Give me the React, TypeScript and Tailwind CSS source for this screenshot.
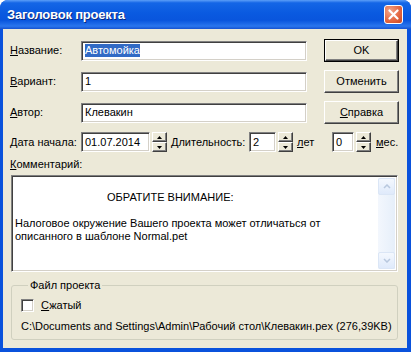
import React from 'react'

type FieldProps = {
	value: string
	width: string
	selected?: boolean
}

const sunken =
	'border border-t-[#808080] border-l-[#808080] border-b-white border-r-white shadow-[inset_1px_1px_0_#404040,inset_-1px_-1px_0_#d4d0c8] bg-white'

function Field({ value, width, selected }: FieldProps) {
	return (
		<div className={`${sunken} ${width} h-[20px] flex items-center pl-[3px] overflow-hidden`}>
			{selected ? <span className="bg-[#316ac5] text-white leading-[13px]">{value}</span> : <span>{value}</span>}
		</div>
	)
}

function Spinner() {
	return (
		<div className="flex flex-col w-[15px] h-[20px] ml-[2px]">
			{['up', 'down'].map((dir) => (
				<div
					key={dir}
					className="flex-1 flex items-center justify-center bg-[#ece9d8] border border-t-white border-l-white border-b-[#404040] border-r-[#404040] shadow-[inset_-1px_-1px_0_#808080]"
				>
					<svg width="5" height="3" viewBox="0 0 5 3">
						{dir === 'up' ? <path d="M2.5 0 L5 3 L0 3 Z" fill="#000" /> : <path d="M0 0 L5 0 L2.5 3 Z" fill="#000" />}
					</svg>
				</div>
			))}
		</div>
	)
}

function Button({ label, isDefault }: { label: React.ReactNode; isDefault?: boolean }) {
	return (
		<div className={`w-[75px] h-[23px] ${isDefault ? 'border border-black' : ''}`}>
			<div className="w-full h-full flex items-center justify-center bg-[#ece9d8] border border-t-white border-l-white border-b-[#404040] border-r-[#404040] shadow-[inset_-1px_-1px_0_#808080]">
				{label}
			</div>
		</div>
	)
}

function Acc({ ch, rest }: { ch: string; rest: string }) {
	return (
		<span>
			<span className="underline underline-offset-[1px]">{ch}</span>
			{rest}
		</span>
	)
}

export default function App() {
	const rows = [
		{ label: <Acc ch="Н" rest="азвание:" />, value: 'Автомойка', selected: true, button: <Button label="OK" isDefault /> },
		{ label: <Acc ch="В" rest="ариант:" />, value: '1', button: <Button label="Отменить" /> },
		{ label: <Acc ch="А" rest="втор:" />, value: 'Клевакин', button: <Button label={<Acc ch="С" rest="правка" />} /> }
	]

	return (
		<div className="w-[411px] h-[352px] bg-white font-['Liberation_Sans',sans-serif] text-[11px] text-black">
			<div className="w-full h-full flex flex-col rounded-t-[8px] overflow-hidden bg-[#0a52dc]">
				<div className="h-[29px] shrink-0 flex items-center justify-between pl-[7px] pr-[8px] bg-[linear-gradient(180deg,#5c9ef8_0%,#1466e6_10%,#0a5ae0_45%,#0955dd_70%,#2a76ee_90%,#1652d0_100%)]">
					<span className="text-white font-bold text-[13px] tracking-[-0.2px] [text-shadow:1px_1px_0_#0a2a80]">
						Заголовок проекта
					</span>
					<div className="w-[19px] h-[19px] rounded-[3px] border border-white bg-[radial-gradient(circle_at_30%_30%,#f4a488,#e2643e_60%,#c8451f)] flex items-center justify-center">
						<svg width="11" height="11" viewBox="0 0 11 11">
							<path d="M1.5 1.5 L9.5 9.5 M9.5 1.5 L1.5 9.5" stroke="#fff" strokeWidth="2.2" strokeLinecap="round" />
						</svg>
					</div>
				</div>
				<div className="flex-1 mx-[3px] mb-[4px] mr-[4px] bg-[#ece9d8] flex flex-col pl-[7px] pt-[10px]">
					<div className="flex flex-col gap-[8px]">
						{rows.map((r, i) => (
							<div key={i} className="flex items-center h-[23px]">
								<div className="w-[71px]">{r.label}</div>
								<Field value={r.value} width="w-[226px]" selected={r.selected} />
								<div className="ml-[17px]">{r.button}</div>
							</div>
						))}
					</div>
					<div className="flex items-center h-[20px] mt-[8px]">
						<div className="w-[71px]">
							<Acc ch="Д" rest="ата начала:" />
						</div>
						<Field value="01.07.2014" width="w-[69px]" />
						<Spinner />
						<div className="w-[82px] pl-[4px]">Длительность:</div>
						<Field value="2" width="w-[27px]" />
						<Spinner />
						<div className="w-[39px] pl-[4px]">
							<Acc ch="л" rest="ет" />
						</div>
						<Field value="0" width="w-[22px]" />
						<Spinner />
						<div className="pl-[5px]">
							<Acc ch="м" rest="ес." />
						</div>
					</div>
					<div className="mt-[5px] h-[14px] leading-[14px]">
						<Acc ch="К" rest="омментарий:" />
					</div>
					<div className={`${sunken} mt-[4px] ml-[1px] w-[387px] h-[97px] flex`}>
						<div className="flex-1 pl-[3px] pt-[2px] leading-[13px]">
							<div className="h-[13px]" />
							<div className="pl-[92px]">ОБРАТИТЕ ВНИМАНИЕ:</div>
							<div className="h-[13px]" />
							<div>Налоговое окружение Вашего проекта может отличаться от</div>
							<div>описанного в шаблоне Normal.pet</div>
						</div>
						<div className="w-[17px] my-[2px] mr-[2px] flex flex-col bg-[linear-gradient(90deg,#f3f7fd,#e6effa)]">
							{['up', 'down'].map((dir) => (
								<div
									key={dir}
									className={`h-[17px] rounded-[2px] border border-[#dbe6f6] bg-[linear-gradient(180deg,#f4f8fe,#dfeafb)] flex items-center justify-center ${dir === 'down' ? 'mt-auto' : ''}`}
								>
									<svg width="8" height="5" viewBox="0 0 8 5">
										<path d={dir === 'up' ? 'M1 4 L4 1 L7 4' : 'M1 1 L4 4 L7 1'} stroke="#b8c8de" strokeWidth="1.5" fill="none" />
									</svg>
								</div>
							))}
						</div>
					</div>
					<fieldset className="mt-[7px] ml-[1px] w-[387px] h-[61px] border border-[#d0d0bf] rounded-[3px] pl-[9px]">
						<legend className="ml-[7px] px-[2px] leading-[13px]">Файл проекта</legend>
						<div className="flex items-center mt-[7px] h-[13px]">
							<div className={`${sunken} w-[13px] h-[13px]`} />
							<div className="pl-[7px]">
								<Acc ch="С" rest="жатый" />
							</div>
						</div>
						<div className="mt-[8px] leading-[13px]">C:\Documents and Settings\Admin\Рабочий стол\Клевакин.pex (276,39KB)</div>
					</fieldset>
				</div>
			</div>
		</div>
	)
}
